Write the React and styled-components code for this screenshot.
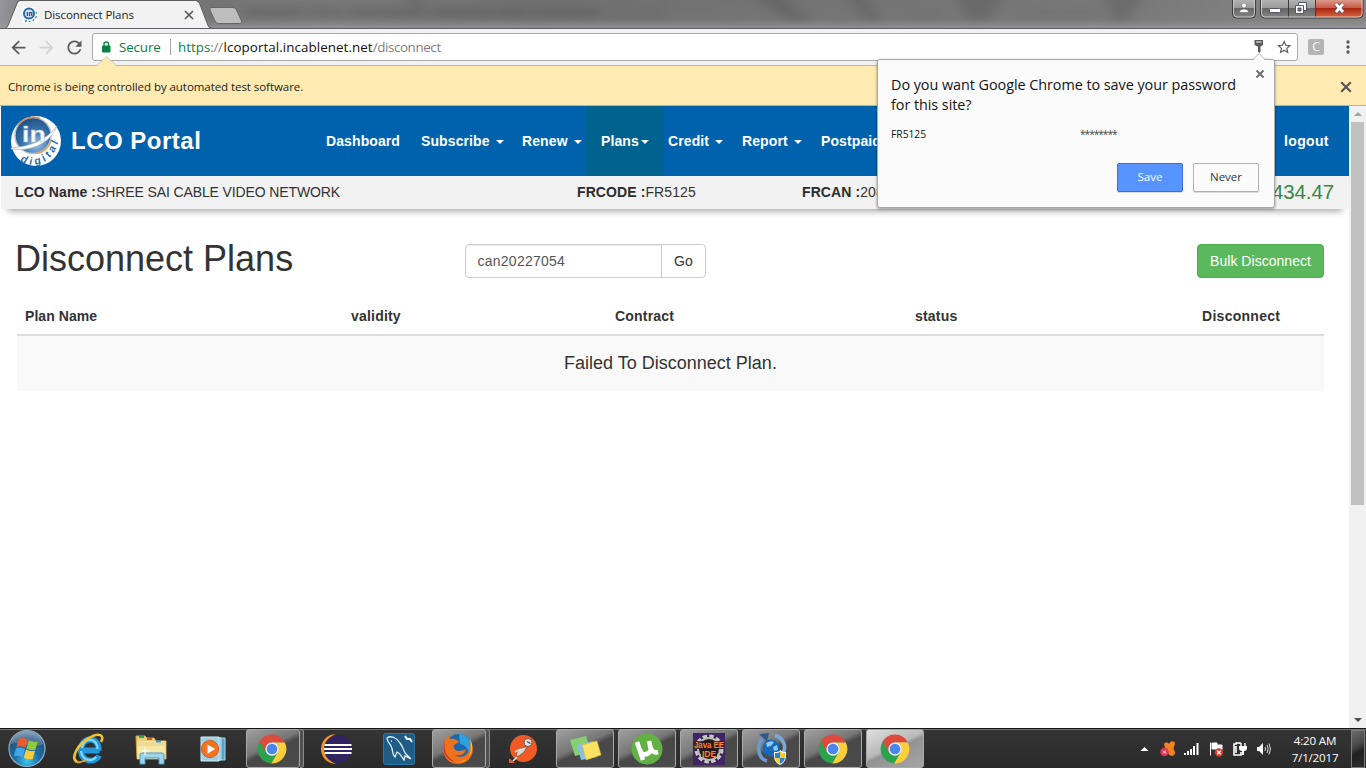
import React from 'react';
import styled, { createGlobalStyle } from 'styled-components';

const UI = `"Open Sans", "Noto Sans", sans-serif`;
const WEB = `"Liberation Sans", Arial, sans-serif`;

const Global = createGlobalStyle`
  * { box-sizing: border-box; }
  body { margin: 0; background: #fff; overflow: hidden; }
  svg { display: block; flex: none; }
`;

const Desktop = styled.div`
  width: 1366px;
  height: 768px;
  display: flex;
  flex-direction: column;
  position: relative;
  overflow: hidden;
  font-family: ${UI};
`;

/* ---------- window frame ---------- */
const TitleBar = styled.div`
  height: 29px;
  flex: none;
  display: flex;
  align-items: flex-start;
  position: relative;
  overflow: hidden;
  background: linear-gradient(90deg, #98959b 0, #85858a 20px, #747474 210px, #787878 330px, #707070 520px, #747474 900px, #787878 1110px, #858585 1366px);
  border-bottom: 1px solid #605e62;
`;
const GlassHaze = styled.svg`
  position: absolute;
  left: 0;
  top: 0;
`;
const TabArea = styled.div`
  position: relative;
  width: 1232px;
  height: 29px;
  display: flex;
`;
const TabShape = styled.svg`
  position: absolute;
  left: 0;
  top: 0;
`;
const TabContent = styled.div`
  position: relative;
  display: flex;
  align-items: center;
  width: 210px;
  height: 29px;
  padding: 1px 0 0 22px;
`;
const TabTitle = styled.span`
  font-size: 11.5px;
  letter-spacing: -0.08px;
  color: #1c1c1c;
  margin: -1px 0 0 6px;
  width: 140px;
  white-space: nowrap;
`;
const WindowButtons = styled.div`
  position: relative;
  display: flex;
`;

/* ---------- browser toolbar ---------- */
const Toolbar = styled.div`
  height: 37px;
  flex: none;
  display: flex;
  align-items: center;
  background: #f2f2f2;
  border-bottom: 1px solid #b6b4b6;
  padding-left: 8px;
`;
const NavButtons = styled.div`
  display: flex;
  gap: 7px;
  width: 84px;
`;
const Omnibox = styled.div`
  width: 1206px;
  height: 28px;
  display: flex;
  align-items: center;
  background: #fff;
  border: 1px solid #a9a9a9;
  border-radius: 3px;
  padding: 0 5px 0 8px;
  font-size: 13.4px;
  white-space: nowrap;
`;
const Secure = styled.span`
  color: #0b8043;
  margin-left: 8px;
  width: 51px;
  letter-spacing: -0.15px;
`;
const Divider = styled.span`
  width: 1px;
  height: 16px;
  background: #a8a8a8;
  margin-right: 7px;
`;
const Url = styled.span`
  flex: 1;
  color: #808080;
  letter-spacing: -0.4px;
  b { font-weight: 400; color: #0b8043; letter-spacing: 0; }
  em { font-style: normal; color: #111; letter-spacing: 0.06px; margin-left: 1px; }
`;
const Extension = styled.div`
  width: 16px;
  height: 16px;
  margin: 0 22px 0 10px;
  border-radius: 2px;
  background: #b4b4b4;
  color: #fff;
  font-size: 12px;
  line-height: 16px;
  text-align: center;
`;
const InfoBar = styled.div`
  height: 40px;
  flex: none;
  position: relative;
  display: flex;
  align-items: center;
  justify-content: space-between;
  padding: 2px 14px 0 8px;
  background: #ffebb2;
  border-bottom: 1px solid #b5b3a8;
  font-size: 11.5px;
  letter-spacing: -0.06px;
  color: #222;
`;
const InfoArrow = styled.svg`
  position: absolute;
  left: 96px;
  top: -10px;
`;

/* ---------- web page ---------- */
const Viewport = styled.div`
  flex: 1;
  display: flex;
  min-height: 0;
  font-family: ${WEB};
`;
const Page = styled.div`
  width: 1348px;
  margin-left: 1px;
  display: flex;
  flex-direction: column;
  font-size: 14px;
  color: #333;
  letter-spacing: 0.1px;
`;
const Header = styled.header`
  height: 70px;
  flex: none;
  display: grid;
  grid-template-columns: 70px 255px 95px 101px 64px 78px 4px 74px 79px 463px 1fr;
  align-items: center;
  background: #0062ac;
  color: #fff;
  font-weight: 700;
  white-space: nowrap;
`;
const Brand = styled.div`
  font-size: 24px;
  letter-spacing: 0.5px;
`;
const NavItem = styled.div`
  height: 70px;
  display: flex;
  align-items: center;
  padding-left: ${p => (p.$active ? 15 : 0)}px;
  background: ${p => (p.$active ? '#00628f' : 'transparent')};
  &:last-child { letter-spacing: 0.35px; }
`;
const Caret = styled.i`
  margin: 2px 0 0 ${p => p.$gap}px;
  border: 4px solid transparent;
  border-top-color: #fff;
  border-bottom: 0;
`;
const Account = styled.div`
  height: 33px;
  flex: none;
  display: grid;
  grid-template-columns: 562px 225px 392px 1fr;
  align-items: center;
  padding: 0 15px 1px 14px;
  background: #f2f2f2;
  white-space: nowrap;
  box-shadow: 0 9px 7px -7px rgba(0, 0, 0, 0.38);
  b { color: #2c2c2c; }
`;
const Value = styled.span`
  letter-spacing: ${p => (p.$wide ? '0.08px' : '-0.12px')};
`;
const Balance = styled.span`
  font-size: 20.5px;
  letter-spacing: -0.1px;
  color: #3c863f;
  text-align: right;
`;
const ActionRow = styled.div`
  display: flex;
  align-items: center;
  margin: 35px 25px 0 15px;
  height: 34px;
`;
const Title = styled.h1`
  margin: -5px 0 0 -1px;
  width: 450px;
  font-size: 36px;
  font-weight: 400;
  letter-spacing: 0;
`;
const Field = styled.div`
  width: 197px;
  height: 34px;
  border: 1px solid #ccc;
  border-radius: 4px 0 0 4px;
  padding: 0 11.5px;
  line-height: 32px;
  color: #555;
  letter-spacing: 0.25px;
  box-shadow: inset 0 1px 1px rgba(0, 0, 0, 0.075);
`;
const Button = styled.div`
  width: ${p => p.$w}px;
  height: 34px;
  text-align: center;
  line-height: 32px;
  border: 1px solid ${p => (p.$green ? '#4cae4c' : '#ccc')};
  border-radius: ${p => (p.$green ? '4px' : '0 4px 4px 0')};
  background: ${p => (p.$green ? '#5cb85c' : '#fff')};
  color: ${p => (p.$green ? '#fff' : '#333')};
  margin-left: ${p => (p.$green ? 'auto' : '-1px')};
  letter-spacing: ${p => (p.$green ? '0.03px' : '0.1px')};
`;
const Table = styled.div`
  margin: 19px 25px 0 16px;
`;
const HeadRow = styled.div`
  height: 39px;
  display: grid;
  grid-template-columns: 326px 264px 300px 287px 1fr;
  align-items: center;
  padding: 0 8px;
  border-bottom: 2px solid #ddd;
  font-weight: 700;
  letter-spacing: 0.2px;
  span:first-child { letter-spacing: 0.06px; }
  span:last-child { letter-spacing: 0.28px; }
`;
const MessageRow = styled.div`
  height: 55px;
  line-height: 54px;
  background: #f9f9f9;
  text-align: center;
  font-size: 18px;
  letter-spacing: 0;
`;
const ScrollBar = styled.div`
  width: 17px;
  background: #f1f1f1;
  display: flex;
  flex-direction: column;
  align-items: center;
  padding: 6px 0;
`;
const Thumb = styled.div`
  width: 13px;
  height: 383px;
  margin: 6px 0 auto;
  background: #c1c1c1;
`;

/* ---------- password bubble ---------- */
const Bubble = styled.div`
  position: absolute;
  left: 877px;
  top: 59px;
  width: 398px;
  height: 149px;
  padding: 15px 15px 15px 13px;
  background: #fbfbfb;
  border: 1px solid #a8a8a8;
  border-radius: 3px;
  box-shadow: 0 1px 3px rgba(0, 0, 0, 0.4);
  color: #141414;
  font-size: 11.5px;
`;
const BubbleArrow = styled.svg`
  position: absolute;
  left: 374px;
  top: -8px;
`;
const BubbleClose = styled.svg`
  position: absolute;
  left: 377px;
  top: 9px;
`;
const Question = styled.div`
  font-size: 14.4px;
  line-height: 20px;
  letter-spacing: -0.05px;
  white-space: nowrap;
`;
const Credentials = styled.div`
  display: flex;
  height: 28px;
  align-items: center;
  margin-top: 5px;
  font-size: 10.3px;
  letter-spacing: -0.02px;
  span:first-child { width: 189px; }
  span:last-child { letter-spacing: -1.1px; color: #444; }
`;
const BubbleActions = styled.div`
  display: flex;
  justify-content: flex-end;
  gap: 10px;
  margin-top: 15px;
`;
const BubbleButton = styled.div`
  width: 66px;
  height: 29px;
  line-height: 26px;
  text-align: center;
  border-radius: 2px;
  border: 1px solid ${p => (p.$primary ? '#3a6fd8' : '#b0b0b0')};
  background: ${p => (p.$primary ? '#5794ff' : '#fbfbfb')};
  color: ${p => (p.$primary ? '#fff' : '#333')};
  box-shadow: 0 1px 0 rgba(0, 0, 0, 0.12);
`;

/* ---------- taskbar ---------- */
const TaskBar = styled.div`
  height: 40px;
  flex: none;
  display: flex;
  align-items: stretch;
  background: linear-gradient(180deg, #151515 0, #151515 1px, #737373 1px, #737373 2px, #343434 2px, #2a2a2a 100%);
`;
const Start = styled.div`
  width: 58px;
  padding: 1px 0 0 7px;
`;
const Slot = styled.div`
  width: 62px;
  padding: 1px 2px 0;
  display: flex;
`;
const AppButton = styled.div`
  width: ${p => (p.$stack ? 54 : 58)}px;
  height: 39px;
  display: flex;
  align-items: center;
  justify-content: center;
  padding-right: ${p => (p.$stack ? 2 : 1)}px;
  border-radius: 3px;
  border: 1px solid ${p => (p.$state ? '#a9a9a9' : 'transparent')};
  background: ${p =>
    p.$state === 'active'
      ? 'linear-gradient(155deg, #e0e0e0 0, #b9b9b9 45%, #929292 52%, #a6a6a6 100%)'
      : p.$state
      ? 'linear-gradient(155deg, #a0a0a0 0, #777 42%, #484848 52%, #4b4b4b 100%)'
      : 'transparent'};
`;
const StackEdge = styled.div`
  width: 4px;
  height: 39px;
  border: 1px solid #8b8b8b;
  border-left: 0;
  border-radius: 0 3px 3px 0;
  background: #505050;
`;
const Tray = styled.div`
  margin-left: auto;
  display: flex;
  align-items: center;
  padding-top: 2px;
  gap: 8px;
`;
const TrayArrow = styled.svg`
  margin-right: 3px;
`;
const Clock = styled.div`
  width: 72px;
  margin: 0 -8px 0 -1px;
  text-align: center;
  color: #fff;
  font-size: 11.6px;
  line-height: 17px;
  letter-spacing: -0.2px;
  white-space: nowrap;
`;
const ShowDesktop = styled.div`
  width: 14px;
  height: 38px;
  border: 1px solid #7b7b7b;
  margin-right: 1px;
  background: linear-gradient(150deg, #6a6a6a 0, #484848 40%, #1f1f1f 60%, #2e2e2e 100%);
`;

/* ---------- drawings ---------- */
const Cross = ({ size = 10, color = '#555', w = 2 }) => (
  <svg width={size} height={size} viewBox="0 0 10 10">
    <path d="M1 1l8 8M9 1l-8 8" stroke={color} strokeWidth={w} fill="none" />
  </svg>
);

const Glyph = ({ d, color = '#5a5a5a', size = 21 }) => (
  <svg width={size} height={size} viewBox="0 0 24 24" fill={color}><path d={d} /></svg>
);

const InDigital = () => (
  <svg width="62" height="52" viewBox="-9 0 62 52" overflow="visible">
    <defs>
      <radialGradient id="globe" cx=".6" cy=".75" r=".85">
        <stop offset="0" stopColor="#9cc4e6" /><stop offset=".4" stopColor="#3f7ab4" /><stop offset="1" stopColor="#164679" />
      </radialGradient>
      <path id="rim" d="M9.500 45.500C21 54 45 52 50.500 18" />
    </defs>
    <circle cx="26" cy="26" r="25" fill="#fff" />
    <circle cx="23" cy="20.500" r="18" fill="url(#globe)" stroke="#b3c2ce" strokeWidth="1.400" />
    <path d="M7.500 11A18.500 18.500 0 0 1 30 3.500" fill="none" stroke="#ea8343" strokeWidth="1.400" />
    <path d="M41 26A18.500 18.500 0 0 1 27 38.500" fill="none" stroke="#e8a24e" strokeWidth="1.300" />
    <path d="M1 33C19 32 37 25 47 11C41 28 21 37 1 34Z" fill="#fff" stroke="#a9b5be" strokeWidth=".7" />
    <text x="12" y="27" fontFamily={WEB} fontWeight="700" fontSize="22" textLength="24" lengthAdjust="spacingAndGlyphs" fill="#fff" stroke="#a8c0d6" strokeWidth=".5">in</text>
    <text fontFamily={WEB} fontWeight="700" fontStyle="italic" fontSize="10.500" fill="#2d69a8" letterSpacing="3.200">
      <textPath href="#rim" startOffset="1">digital</textPath>
    </text>
  </svg>
);

const Favicon = () => (
  <svg width="16" height="16" viewBox="0 0 16 16">
    <rect width="16" height="16" fill="#f7f9fb" />
    <circle cx="7" cy="6.500" r="5" fill="#d4e2ee" stroke="#2c6aa5" strokeWidth="2" />
    <path d="M5.400 5v4M7.500 9V5.600h2.200V9" stroke="#285f99" strokeWidth="1.300" fill="none" />
    <path d="M3 14.500l2-1M7 15l1.500-1M11 14l1-2M13.500 11l1-2M14 6.500l.8-1.500" stroke="#4587c4" strokeWidth="1.400" />
  </svg>
);

const ChromeLogo = () => (
  <svg width="30" height="30" viewBox="0 0 48 48">
    <path d="M3.600 13A23 23 0 0 1 44.400 13.500L24 13.500L14.900 29.300Z" fill="#dd4b3e" />
    <path d="M4.100 12.500A23 23 0 0 0 22.800 47L33.100 29.300L14.900 29.300Z" fill="#2ba24c" />
    <path d="M44.400 13.500A23 23 0 0 1 22.800 47L33.100 29.300L33 18.500L24 13.500Z" fill="#fbce3c" />
    <circle cx="24" cy="24" r="10.600" fill="#f4f4f4" />
    <circle cx="24" cy="24" r="8.500" fill="#4a86ee" />
  </svg>
);

const StartOrb = () => (
  <svg width="40" height="39" viewBox="0 0 40 39">
    <defs>
      <radialGradient id="orb" cx=".5" cy=".85" r=".85">
        <stop offset="0" stopColor="#3fc6ee" /><stop offset=".4" stopColor="#1b6fa5" /><stop offset=".75" stopColor="#24557f" /><stop offset="1" stopColor="#7f9cb3" />
      </radialGradient>
    </defs>
    <circle cx="20" cy="19.500" r="18" fill="url(#orb)" stroke="#8fb0c4" strokeWidth="1.200" />
    <path d="M4 15C7 5 15 2.500 20 2.500S33 5 36 15C26 20 14 11 4 15Z" fill="#fff" opacity=".2" />
    <g transform="rotate(8 20 19.500)">
      <path d="M10.500 11q4.500-2.500 9-.5l-1.200 8.500q-4.500-2-9 .5Z" fill="#ee5a2a" />
      <path d="M20.700 11q4.500 2 9 0l-1.200 8.500q-4.500 2-9 0Z" fill="#92c83e" />
      <path d="M9.100 20.700q4.500-2.500 9-.5l-1.200 8.500q-4.500-2-9 .5Z" fill="#42a5e6" />
      <path d="M19.300 20.700q4.500 2 9 0l-1.200 8.500q-4.500 2-9 0Z" fill="#fccb3a" />
    </g>
  </svg>
);

const IeLogo = () => (
  <svg width="34" height="34" viewBox="0 0 34 34">
    <path d="M27.500 18.500H9.500M26.500 18.500C28 4 9 4 9 18C9 31 24 31 27 23.500" fill="none" stroke="#2497dc" strokeWidth="6" />
    <path d="M25.500 17C26 5 11 5 10 16M9 19C10 29 20 30 24 25" fill="none" stroke="#7fdcfb" strokeWidth="2.200" />
    <path d="M5 30C-2 26 6 12 17 6C27 0 33 3 29 10" fill="none" stroke="#f3c22e" strokeWidth="2.600" />
    <path d="M5 30C9 31 12 29 14 27.500" fill="none" stroke="#e5a91e" strokeWidth="2" />
  </svg>
);

const Explorer = () => (
  <svg width="34" height="32" viewBox="0 0 34 32">
    <path d="M2 3h9l2 2h7l2 3h10v18H3Z" fill="#e9cf7a" stroke="#c8a74c" />
    <path d="M3.500 8h28v18h-28Z" fill="#f8e8a8" />
    <path d="M4 10h27M4 12h27" stroke="#dec277" strokeWidth=".8" />
    <path d="M5 3h5v2H5Z" fill="#20a84c" /><path d="M13 5h5v2h-5Z" fill="#d84e38" /><path d="M22 7.500h5v2h-5Z" fill="#3c9ade" />
    <path d="M6 31V22q0-2 2-2h20q2 0 2 2v9h-5v-6H11v6Z" fill="#9fd4ee" stroke="#4d9ac4" />
    <path d="M11 14v8M7 18h8" stroke="#fff" strokeWidth="1.200" />
  </svg>
);

const MediaPlayer = () => (
  <svg width="28" height="28" viewBox="0 0 28 28">
    <path d="M10 3h16v22H10Z" fill="#5ba4c9" stroke="#a9d6ea" />
    <path d="M6 3h16v22H6Z" fill="#79bcdb" stroke="#c0e2f0" />
    <path d="M2 2h18v24H2Z" fill="#9bcfe6" stroke="#d2ecf6" />
    <circle cx="11" cy="14" r="8.600" fill="#f37320" stroke="#d8601a" />
    <path d="M8.500 9.500L16 14l-7.500 4.800Z" fill="#fff" />
  </svg>
);

const Eclipse = () => (
  <svg width="34" height="32" viewBox="0 0 34 32">
    <path d="M16 1C-4 2-4 30 16 31C3 26 3 6 16 1Z" fill="#f7941e" />
    <circle cx="18" cy="16" r="14" fill="#2f2460" />
    <path d="M4.500 12h27M4 16h28M4.500 20h27" stroke="#fff" strokeWidth="2" />
  </svg>
);

const MySql = () => (
  <svg width="32" height="32" viewBox="0 0 32 32">
    <rect x=".5" y=".5" width="31" height="31" rx="2" fill="#1f5c86" stroke="#2d77a8" />
    <path d="M4 5C8 2 14 5 17 10C20 14 21 18 22 20L28 26L22 23L21 27C19 24 17 20 14 19L12 24C9 22 10 16 8 13C6 10 4 8 4 5ZM8 8h1" fill="none" stroke="#e2edf4" strokeWidth="1.300" />
    <path d="M22 3l2 3 3 0 2 3" stroke="#fff" strokeWidth="2" fill="none" />
  </svg>
);

const Firefox = () => (
  <svg width="32" height="32" viewBox="0 0 32 32">
    <circle cx="17" cy="14.500" r="13.500" fill="#1d68ae" />
    <path d="M17 1C29 1 33 15 27 23C27 15 23 12 18 11Z" fill="#2fa0dc" />
    <path d="M3 7C4 5 5 4 7 3L8 6C12 5 15 7 17 9L12 12C11 15 13 18 17 18C20 18 22 16 24 17C22 22 17 23 13 22C21 27 28 21 28 12C30 7 28 6 27 5C36 18 28 31 16 31C3 31-2 18 3 7Z" fill="#ee711c" />
    <path d="M28 6C34 17 27 29 15 29C23 30 32 24 28 6Z" fill="#fdcd35" />
    <path d="M3 7C1 18 5 25 13 29C4 27-1 18 3 7Z" fill="#c9331f" />
  </svg>
);

const Postman = () => (
  <svg width="30" height="30" viewBox="0 0 30 30">
    <circle cx="15.500" cy="14.500" r="13.500" fill="#f15a24" />
    <path d="M1 29V24L7 29Z" fill="#f15a24" />
    <circle cx="20" cy="8.500" r="4" fill="#e6e6e6" stroke="#6a5650" /><path d="M19 7.500l3.500 2" stroke="#444" strokeWidth="1.400" />
    <path d="M18.500 13C17 19 12 21 8.500 23C8 18 11 15 16 13Z" fill="#d8d8d8" stroke="#8a4a35" strokeWidth=".8" />
    <path d="M13 15l-6 3M9 23l-4 4" stroke="#e8e8e8" strokeWidth="1.500" />
  </svg>
);

const StickyNotes = () => (
  <svg width="34" height="28" viewBox="0 0 34 28">
    <path d="M2 5L18 1L23 17L7 21Z" fill="#85cf71" />
    <path d="M9 10L25 6L29 22L13 25Z" fill="#86bfed" />
    <path d="M14 10L29 6L33 20L18 25Z" fill="#fbe262" stroke="#d8b934" strokeWidth=".6" />
  </svg>
);

const UTorrent = () => (
  <svg width="32" height="32" viewBox="0 0 32 32">
    <circle cx="16" cy="16" r="15.500" fill="#62b144" />
    <path d="M6 9L12 27M9 16C10 23 17 23 20 17L18 8M19 13Q21 21 27 19" fill="none" stroke="#fff" strokeWidth="4.600" />
  </svg>
);

const JavaEE = () => (
  <svg width="32" height="32" viewBox="0 0 32 32" overflow="visible">
    <rect width="32" height="32" fill="#422464" />
    <circle cx="16" cy="16" r="13" fill="#222" stroke="#c9c9c9" strokeWidth="3" strokeDasharray="4.500 2.300" />
    <circle cx="16" cy="16" r="11" fill="#251d22" stroke="#bcbcbc" strokeWidth="2" />
    <path d="M1 8h30v8H1ZM8 16h16v8H8Z" fill="#2c161c" opacity=".8" />
    <g fontFamily={WEB} fontWeight="700" fontSize="9" fill="#f88a28">
      <text x="1" y="14.500" textLength="30" lengthAdjust="spacingAndGlyphs">Java EE</text>
      <text x="9" y="23.500" textLength="14" lengthAdjust="spacingAndGlyphs">IDE</text>
    </g>
  </svg>
);

const Updater = () => (
  <svg width="34" height="34" viewBox="0 0 34 34">
    <circle cx="17" cy="16" r="8.500" fill="#1769ba" />
    <path d="M12 11q5-3 8-1l-3 4-4 1ZM19 15l4-2 1 5-4 1Z" fill="#8ecbf4" />
    <path d="M13 29C3 26 2 12 10 5" fill="none" stroke="#6c99cf" strokeWidth="3.600" /><path d="M5 2L15 1L13 10Z" fill="#35588f" />
    <path d="M21 3C29 6 33 14 29 21" fill="none" stroke="#7ca7d8" strokeWidth="3.600" />
    <path d="M20 20q6 0 6-2q2 2 6 2q1 10-6 13q-7-3-6-13Z" fill="#fff" />
    <path d="M21 21q4 0 5-1.500V26h-5ZM26 26h5q-1 4-5 6Z" fill="#2d7ed2" /><path d="M26 19.500q2 1.500 5 1.500v5h-5ZM21 26h5v6q-4-2-5-6Z" fill="#f8cb2e" />
  </svg>
);

const apps = [
  { icon: IeLogo }, { icon: Explorer }, { icon: MediaPlayer },
  { icon: ChromeLogo, state: 'open', stack: true },
  { icon: Eclipse }, { icon: MySql },
  { icon: Firefox, state: 'open', stack: true },
  { icon: Postman },
  { icon: StickyNotes, state: 'open' }, { icon: UTorrent, state: 'open' }, { icon: JavaEE, state: 'open' },
  { icon: Updater, state: 'open' }, { icon: ChromeLogo, state: 'open' }, { icon: ChromeLogo, state: 'active' },
];

const WindowControls = () => (
  <svg width="134" height="20" viewBox="0 0 134 20">
    <defs>
      <linearGradient id="wb" x2="0" y2="1"><stop offset="0" stopColor="#b5b5b5" /><stop offset=".48" stopColor="#989898" /><stop offset=".5" stopColor="#666" /><stop offset="1" stopColor="#868686" /></linearGradient>
      <linearGradient id="wr" x2="0" y2="1"><stop offset="0" stopColor="#dda395" /><stop offset=".48" stopColor="#c65742" /><stop offset=".5" stopColor="#ab2610" /><stop offset="1" stopColor="#d96b4a" /></linearGradient>
    </defs>
    <path d="M.5 -1V14q0 4 4 4H19.500q4 0 4-4V-1Z" fill="url(#wb)" stroke="#3c3c3c" />
    <path d="M1.500 0V13.500q0 3.500 3.500 3.500H19q3.500 0 3.500-3.500V0" fill="none" stroke="#d4d4d4" strokeWidth=".8" />
    <path d="M28.500 -1V14q0 4 4 4H83V-1Z" fill="url(#wb)" />
    <path d="M83 -1V18H127q4 0 4-4V-1Z" fill="url(#wr)" />
    <path d="M28.500 -1V14q0 4 4 4H127q4 0 4-4V-1M56.500 0V17.500M83.500 0V17.500" fill="none" stroke="#3c3c3c" />
    <path d="M29.500 0V13.500q0 3.500 3.500 3.500H126.500q3.500 0 3.500-3.500V0" fill="none" stroke="#dedede" strokeWidth=".8" />
    <circle cx="12" cy="5.500" r="2.400" fill="#fff" stroke="#555" strokeWidth=".5" /><path d="M7.500 12.500q0-3.500 4.500-3.500t4.500 3.500Z" fill="#fff" stroke="#555" strokeWidth=".5" />
    <rect x="37.500" y="8.500" width="11" height="4" rx="1" fill="#fff" stroke="#525566" />
    <path d="M66.500 2.500h8v8h-8Z" fill="#fff" stroke="#525566" /><path d="M63.500 5.500h8v8h-8Z" fill="#fff" stroke="#525566" /><path d="M66 8h3v3h-3Z" fill="#777" stroke="#525566" />
    <path d="M104 4l7 8M111 4l-7 8" stroke="#525566" strokeWidth="4.600" /><path d="M104 4l7 8M111 4l-7 8" stroke="#fff" strokeWidth="2.800" />
  </svg>
);

const TrayIcons = () => (
  <>
    <TrayArrow width="9" height="6" viewBox="0 0 9 6"><path d="M.5 5L4.500 1l4 4Z" fill="#fff" /></TrayArrow>
    <svg width="16" height="16" viewBox="0 0 16 16">
      <path d="M4 3C5 1 8 1 9 3C11-1 15 0 15 3C14 6 13 7 14 9C16 11 15 15 12 15C9 15 9 12 6 13C3 12 4 9 5 7Z" fill="#f58220" />
      <circle cx="4.500" cy="11" r="4.300" fill="#e33350" /><path d="M3 9.500l3 3M6 9.500l-3 3" stroke="#fff" strokeWidth="1" />
    </svg>
    <svg width="16" height="14" viewBox="0 0 16 14"><path d="M1 13v-2M4 13v-4M7 13V7M10 13V4M13.500 13V1" stroke="#fff" strokeWidth="2" /></svg>
    <svg width="16" height="16" viewBox="0 0 16 16">
      <path d="M2.500 1.500v13M4 2h5v2h5v5H9V8H4Z" fill="#fff" stroke="#fff" />
      <circle cx="11" cy="11.500" r="4.200" fill="#d93b2b" /><path d="M9.200 9.700l3.600 3.600M12.800 9.700l-3.600 3.600" stroke="#fff" strokeWidth="1.400" />
    </svg>
    <svg width="16" height="16" viewBox="0 0 16 16">
      <path d="M8 3V2H4v1H2v11h7v-3M4 5v7" fill="none" stroke="#fff" strokeWidth="1.600" />
      <path d="M9 2v3M13 2v3" stroke="#fff" strokeWidth="1.400" /><path d="M7 5h8v2q0 3-3 3v4h-2v-4q-3 0-3-3Z" fill="#fff" />
    </svg>
    <svg width="16" height="14" viewBox="0 0 16 14">
      <path d="M1 5h2l4-4v12L3 9H1Z" fill="#fff" /><path d="M9 5q1 2 0 4M11 3q2.500 4 0 8M13 1.500q3 5.500 0 11" fill="none" stroke="#ddd" />
    </svg>
  </>
);

export default function App() {
  return (
    <Desktop>
      <Global />
      <TitleBar>
        <GlassHaze width="1366" height="28">
          <defs>
            <filter id="haze" x="-10%" width="120%" y="-100%" height="300%"><feGaussianBlur stdDeviation="6 4" /></filter>
            <linearGradient id="shade" x2="0" y2="1"><stop offset="0" stopColor="#777" stopOpacity="0" /><stop offset=".65" stopColor="#888" stopOpacity=".1" /><stop offset="1" stopColor="#a2a0a4" stopOpacity=".65" /></linearGradient>
          </defs>
          <g filter="url(#haze)" opacity=".3">
            <path d="M245 13H600" stroke="#3a3a3a" strokeWidth="7" strokeDasharray="60 4 34 4 80 5" />
            <path d="M608 14H665" stroke="#555" strokeWidth="5" />
            <path d="M402 -4H412L425 12M758 -4H778L808 20H790ZM850 -4H860L878 20H868ZM960 -4H1000L985 20H968ZM1108 -4H1140L1125 22H1115Z" stroke="#484c4c" strokeWidth="4" fill="#484c4c" />
            <path d="M905 15H945M1020 15H1105" stroke="#606060" strokeWidth="5" />
          </g>
          <rect width="1366" height="28" fill="url(#shade)" />
        </GlassHaze>
        <TabArea>
          <TabShape width="250" height="29" viewBox="0 0 250 29">
            <path d="M0 29V28H5Q7 28 8 25.500L17 3.500Q18 1 20 1H196Q198 1 199.500 3.500L208 25.500Q209 28.500 212 28.500L212 29Z" fill="#f2f2f2" />
            <path d="M0 28.500H5Q7 28 8 25.500L17 3.500Q18 .5 20 .5H196Q198 .5 199.500 3.500L208 25.500Q209 28.500 212 28.500" fill="none" stroke="#5f5f5f" />
            <path d="M211 7.500H233Q235.500 7.500 236.500 10L241.500 21Q242.500 23.500 240 23.500H218Q216 23.500 215 21L210 10Q209.200 7.500 211 7.500Z" fill="#bdbdbd" stroke="#666" />
          </TabShape>
          <TabContent>
            <Favicon />
            <TabTitle>Disconnect Plans</TabTitle>
            <Cross size={10} color="#5a5a5a" w={1.7} />
          </TabContent>
        </TabArea>
        <WindowButtons><WindowControls /></WindowButtons>
      </TitleBar>

      <Toolbar>
        <NavButtons>
          <Glyph d="M20 11H7.830l5.590-5.590L12 4l-8 8 8 8 1.410-1.410L7.830 13H20v-2z" />
          <Glyph color="#d2d2d2" d="M12 4l-1.410 1.410L16.170 11H4v2h12.170l-5.580 5.590L12 20l8-8z" />
          <Glyph d="M17.650 6.350C16.200 4.900 14.210 4 12 4c-4.420 0-7.990 3.580-7.990 8s3.570 8 7.990 8c3.730 0 6.840-2.550 7.730-6h-2.080c-.82 2.330-3.040 4-5.650 4-3.310 0-6-2.690-6-6s2.690-6 6-6c1.660 0 3.140.69 4.220 1.780L13 11h7V4l-2.350 2.350z" />
        </NavButtons>
        <Omnibox>
          <svg width="10" height="12" viewBox="0 0 10 12"><rect x="1" y="4.500" width="8.500" height="7" rx="1" fill="#0b8043" /><path d="M3 5V3q0-2 2.200-2T7.500 3v2" fill="none" stroke="#0b8043" strokeWidth="1.400" /></svg>
          <Secure>Secure</Secure>
          <Divider />
          <Url><b>https</b>://<em>lcoportal.incablenet.net</em>/disconnect</Url>
          <svg width="44" height="18" viewBox="0 0 44 18">
            <path d="M7 3h8.500v5L13 9.500v5L11.800 16l-1.300-1.300V9.500L7 8Z" fill="#5a5a5a" transform="translate(-.5 -1)" /><path d="M8 4h5.500" stroke="#fff" strokeWidth="1" />
            <g transform="translate(27.500 .5) scale(.72)"><path fill="#5a5a5a" d="M22 9.240l-7.190-.62L12 2 9.190 8.630 2 9.240l5.460 4.730L5.820 21 12 17.270 18.180 21l-1.630-7.030L22 9.240zM12 15.400l-3.760 2.270 1-4.280-3.320-2.880 4.380-.38L12 6.100l1.710 4.040 4.380.38-3.320 2.880 1 4.280L12 15.400z" /></g>
          </svg>
        </Omnibox>
        <Extension>C</Extension>
        <svg width="4" height="14" viewBox="0 0 4 14" fill="#5a5a5a"><circle cx="2" cy="2" r="1.700" /><circle cx="2" cy="7" r="1.700" /><circle cx="2" cy="12" r="1.700" /></svg>
      </Toolbar>

      <InfoBar>
        <InfoArrow width="22" height="11" viewBox="0 0 22 11"><path d="M0 10.500L10.500 .5L21 10.500V11H0Z" fill="#ffebb2" /><path d="M0 10L10.500 .5L21 10" fill="none" stroke="#c4bca4" strokeWidth=".8" /></InfoArrow>
        <span>Chrome is being controlled by automated test software.</span>
        <Cross size={12} w={1.8} />
      </InfoBar>

      <Viewport>
        <Page>
          <Header>
            <InDigital />
            <Brand>LCO Portal</Brand>
            <NavItem>Dashboard</NavItem>
            <NavItem>Subscribe<Caret $gap={6} /></NavItem>
            <NavItem>Renew<Caret $gap={6} /></NavItem>
            <NavItem $active>Plans<Caret $gap={2} /></NavItem>
            <span />
            <NavItem>Credit<Caret $gap={6} /></NavItem>
            <NavItem>Report<Caret $gap={6} /></NavItem>
            <NavItem>Postpaid</NavItem>
            <NavItem>logout</NavItem>
          </Header>
          <Account>
            <div><b>LCO Name :</b><Value>SHREE SAI CABLE VIDEO NETWORK</Value></div>
            <div><b>FRCODE :</b><Value $wide>FR5125</Value></div>
            <div><b>FRCAN :</b><Value $wide>208</Value></div>
            <Balance>434.47</Balance>
          </Account>
          <ActionRow>
            <Title>Disconnect Plans</Title>
            <Field>can20227054</Field>
            <Button $w={45}>Go</Button>
            <Button $w={127} $green>Bulk Disconnect</Button>
          </ActionRow>
          <Table>
            <HeadRow><span>Plan Name</span><span>validity</span><span>Contract</span><span>status</span><span>Disconnect</span></HeadRow>
            <MessageRow>Failed To Disconnect Plan.</MessageRow>
          </Table>
        </Page>
        <ScrollBar>
          <svg width="8" height="4" viewBox="0 0 8 4"><path d="M0 4L4 0l4 4Z" fill="#a3a3a3" /></svg>
          <Thumb />
          <svg width="8" height="4" viewBox="0 0 8 4"><path d="M0 0L4 4l4-4Z" fill="#505050" /></svg>
        </ScrollBar>
      </Viewport>

      <TaskBar>
        <Start><StartOrb /></Start>
        {apps.map(({ icon: Icon, state, stack }, i) => (
          <Slot key={i}>
            <AppButton $state={state} $stack={stack}><Icon /></AppButton>
            {stack && <StackEdge />}
          </Slot>
        ))}
        <Tray>
          <TrayIcons />
          <Clock>4:20 AM<br />7/1/2017</Clock>
          <ShowDesktop />
        </Tray>
      </TaskBar>

      <Bubble>
        <BubbleArrow width="14" height="9" viewBox="0 0 14 9"><path d="M1 8.500L7 2L13 8.500V9H1Z" fill="#fbfbfb" /><path d="M.5 8L7 1.500L13.500 8" fill="none" stroke="#b5b5b5" /></BubbleArrow>
        <BubbleClose width="10" height="10" viewBox="0 0 10 10"><path d="M1.500 1.500l7 7M8.500 1.500l-7 7" stroke="#6a6a6a" strokeWidth="1.800" /></BubbleClose>
        <Question>Do you want Google Chrome to save your password<br />for this site?</Question>
        <Credentials><span>FR5125</span><span>********</span></Credentials>
        <BubbleActions>
          <BubbleButton $primary>Save</BubbleButton>
          <BubbleButton>Never</BubbleButton>
        </BubbleActions>
      </Bubble>
    </Desktop>
  );
}
